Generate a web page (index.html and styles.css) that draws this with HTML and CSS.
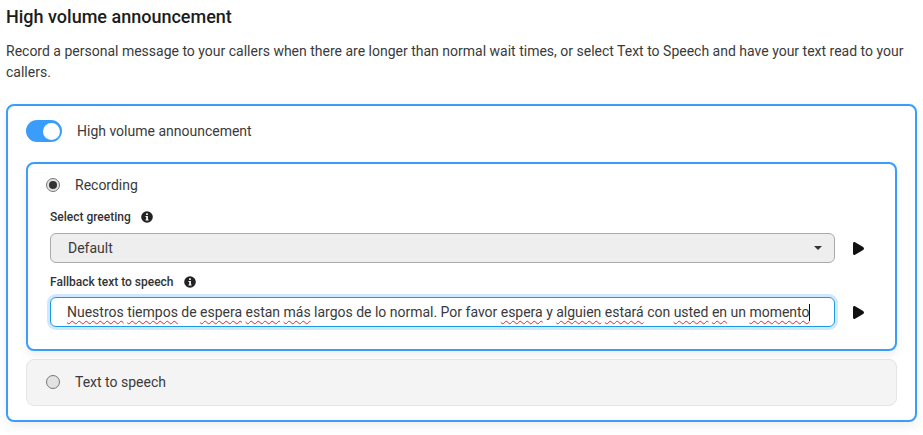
FILE: index.html
```html
<!DOCTYPE html>
<html lang="en">
<head>
<meta charset="utf-8">
<title>High volume announcement</title>
<link rel="stylesheet" href="styles.css">
</head>
<body>
<main class="page">
  <h1 class="title">High volume announcement</h1>
  <p class="desc">Record a personal message to your callers when there are longer than normal wait times, or select Text to Speech and have your text read to your callers.</p>
  <section class="outer">
    <div class="toggle-row">
      <span class="toggle"><span class="knob"></span></span>
      <span class="toggle-label">High volume announcement</span>
    </div>
    <div class="card card-active">
      <div class="radio-row">
        <span class="radio radio-on"><span class="dot"></span></span>
        <span class="radio-label">Recording</span>
      </div>
      <div class="field-label first-label">
        <span>Select greeting</span>
        <svg class="info" viewBox="0 0 12 12"><circle cx="6" cy="6" r="5.8" fill="#222"/><rect x="5.1" y="2.3" width="1.8" height="1.8" rx=".5" fill="#fff"/><path d="M4.5 5h2.4v3.4h.7v1H4.5v-1h.7V6h-.7z" fill="#fff"/></svg>
      </div>
      <div class="control-row">
        <div class="select"><span>Default</span><span class="caret"></span></div>
        <svg class="play" viewBox="0 0 11 13"><path d="M0 1.6C0 .4 1-.3 2.1.3l8 4.6c1.1.7 1.1 2.5 0 3.2l-8 4.6C1 13.3 0 12.6 0 11.4z" fill="#111"/></svg>
      </div>
      <div class="field-label second-label">
        <span>Fallback text to speech</span>
        <svg class="info" viewBox="0 0 12 12"><circle cx="6" cy="6" r="5.8" fill="#222"/><rect x="5.1" y="2.3" width="1.8" height="1.8" rx=".5" fill="#fff"/><path d="M4.5 5h2.4v3.4h.7v1H4.5v-1h.7V6h-.7z" fill="#fff"/></svg>
      </div>
      <div class="control-row control-row-tight">
        <div class="input"><span class="sp">Nuestros</span> <span class="sp">tiempos</span> de <span class="sp">espera</span> <span class="sp">estan</span> <span class="sp">más</span> largos de lo normal. Por favor <span class="sp">espera</span> y <span class="sp">alguien</span> <span class="sp">estará</span> con <span class="sp">usted</span> <span class="sp">en</span> un <span class="sp">momento</span><span class="cursor"></span></div>
        <svg class="play" viewBox="0 0 11 13"><path d="M0 1.6C0 .4 1-.3 2.1.3l8 4.6c1.1.7 1.1 2.5 0 3.2l-8 4.6C1 13.3 0 12.6 0 11.4z" fill="#111"/></svg>
      </div>
    </div>
    <div class="card card-off">
      <div class="radio-row">
        <span class="radio"></span>
        <span class="radio-label">Text to speech</span>
      </div>
    </div>
  </section>
</main>
</body>
</html>
```
FILE: styles.css
```css
* { box-sizing: border-box; }
html, body { margin: 0; padding: 0; background: #fff; }
body { font-family: Roboto, sans-serif; color: #3a3a3a; overflow: hidden; }
.page { width: 923px; height: 435px; padding: 6px 6px 0; }
.title { margin: 0; font-size: 18px; line-height: 22px; font-weight: 500; color: #1c1c1c; }
.desc { margin: 13px 0 0; font-size: 14px; line-height: 21px; color: #3a3a3a; }
.outer { margin-top: 21px; width: 911px; height: 318px; border: 2px solid #3a9dfb; border-radius: 8px; padding: 14px 18px 0; background: #fff; box-shadow: 0 4px 12px rgba(0,0,0,.07); }
.toggle-row { display: flex; align-items: center; height: 22px; }
.toggle { display: flex; align-items: center; justify-content: flex-end; width: 36px; height: 22px; border-radius: 11px; background: #3a9dfb; padding-right: 2px; }
.knob { width: 17px; height: 17px; border-radius: 50%; background: #fff; }
.toggle-label { margin-left: 15px; font-size: 14px; color: #3a3a3a; }
.card { width: 871px; border-radius: 8px; }
.card-active { margin-top: 20px; height: 189px; border: 2px solid #3a9dfb; padding: 9px 22px 0; background: #fff; box-shadow: 0 4px 10px rgba(0,0,0,.07); }
.card-off { margin-top: 8px; height: 47px; border: 1px solid #e4e4e4; background: #f4f4f4; padding: 11px 19px 0; }
.card-off .radio-row { height: 22px; margin-left: 0; }
.radio-row { display: flex; align-items: center; height: 24px; margin-left: -4px; }
.radio { display: flex; align-items: center; justify-content: center; width: 14px; height: 14px; border-radius: 50%; border: 1.5px solid #777; background: #e2e2e2; }
.dot { width: 8px; height: 8px; border-radius: 50%; background: #333; }
.radio-label { margin-left: 15px; font-size: 14px; color: #3a3a3a; }
.field-label { display: flex; align-items: center; gap: 10px; height: 16px; font-size: 12px; font-weight: 500; color: #333; }
.first-label { margin-top: 12px; }
.second-label { margin-top: 11px; }
.info { width: 12px; height: 12px; }
.control-row { display: flex; align-items: center; gap: 18px; margin-top: 8px; }
.control-row-tight { margin-top: 7px; }
.select { display: flex; align-items: center; justify-content: space-between; width: 785px; height: 30px; padding: 0 12px 0 17px; border: 1px solid #aaa; border-radius: 6px; background: #eee; font-size: 14px; color: #3a3a3a; }
.caret { width: 0; height: 0; border-left: 4.5px solid transparent; border-right: 4.5px solid transparent; border-top: 4.5px solid #333; }
.play { width: 11px; height: 13px; flex: none; }
.input { width: 785px; height: 30px; padding: 0 0 0 16px; border: 1px solid #1e9be8; border-radius: 6px; background: #fff; box-shadow: 0 0 0 3px #cfe8ff; font-size: 14px; line-height: 28px; letter-spacing: -.01px; color: #3a3a3a; white-space: nowrap; }
.sp { text-decoration: underline wavy #f0222a 1px; text-underline-offset: 3px; }
.cursor { display: inline-block; width: 1px; height: 17px; background: #111; vertical-align: -4px; }
```
